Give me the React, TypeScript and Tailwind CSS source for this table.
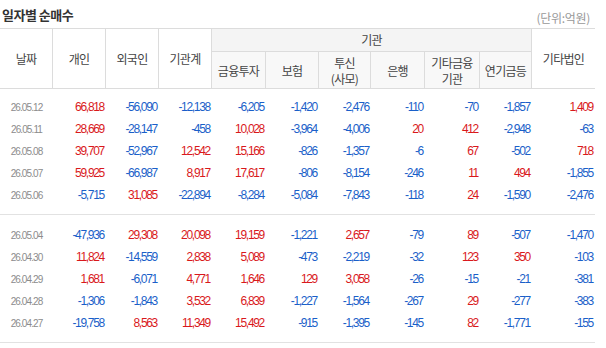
const COLS = "grid grid-cols-[53px_53px_53px_53px_54px_53px_52px_54px_55px_52px_63px]";

type Row = { date: string; values: string[] };

const groups: Row[][] = [
  [
    { date: "26.05.12", values: ["66,818", "-56,090", "-12,138", "-6,205", "-1,420", "-2,476", "-110", "-70", "-1,857", "1,409"] },
    { date: "26.05.11", values: ["28,669", "-28,147", "-458", "10,028", "-3,964", "-4,006", "20", "412", "-2,948", "-63"] },
    { date: "26.05.08", values: ["39,707", "-52,967", "12,542", "15,166", "-826", "-1,357", "-6", "67", "-502", "718"] },
    { date: "26.05.07", values: ["59,925", "-66,987", "8,917", "17,617", "-806", "-8,154", "-246", "11", "494", "-1,855"] },
    { date: "26.05.06", values: ["-5,715", "31,085", "-22,894", "-8,284", "-5,084", "-7,843", "-118", "24", "-1,590", "-2,476"] },
  ],
  [
    { date: "26.05.04", values: ["-47,936", "29,308", "20,098", "19,159", "-1,221", "2,657", "-79", "89", "-507", "-1,470"] },
    { date: "26.04.30", values: ["11,824", "-14,559", "2,838", "5,089", "-473", "-2,219", "-32", "123", "350", "-103"] },
    { date: "26.04.29", values: ["1,681", "-6,071", "4,771", "1,646", "129", "3,058", "-26", "-15", "-21", "-381"] },
    { date: "26.04.28", values: ["-1,306", "-1,843", "3,532", "6,839", "-1,227", "-1,564", "-267", "29", "-277", "-383"] },
    { date: "26.04.27", values: ["-19,758", "8,563", "11,349", "15,492", "-915", "-1,395", "-145", "82", "-1,771", "-155"] },
  ],
];

const subHeads = [["금융투자"], ["보험"], ["투신", "(사모)"], ["은행"], ["기타금융", "기관"], ["연기금등"]];

function DataRow({ row }: { row: Row }) {
  return (
    <div className={`${COLS} h-[22px] items-center`}>
      <div className="text-center text-[10px] tracking-[-0.9px] text-[#8c8c8c]">{row.date}</div>
      {row.values.map((v, i) => (
        <div
          key={i}
          className={`pr-[2px] text-right text-[12px] tracking-[-1.3px] ${
            v.startsWith("-") ? "text-[#1a5fc9]" : "text-[#d9181b]"
          }`}
        >
          {v}
        </div>
      ))}
    </div>
  );
}

export default function App() {
  return (
    <div className="h-[348px] w-[606px] overflow-hidden bg-white font-['Liberation_Sans',sans-serif]">
      {/* Title */}
      <div className="flex h-[28px] w-[595px] items-start justify-between">
        <h2 className="pl-[2px] pt-[7px] font-['Noto_Sans_CJK_KR',sans-serif] text-[13px] font-bold leading-[16px] tracking-[-0.5px] text-[#333]">
          일자별 순매수
        </h2>
        <span className="pr-[5px] pt-[10px] font-['Noto_Sans_CJK_KR',sans-serif] text-[12px] leading-[16px] tracking-[-0.3px] text-[#999]">
          (단위:억원)
        </span>
      </div>

      <div className="w-[595px]">
        {/* Header */}
        <div
          className={`${COLS} grid-rows-[23px_36px] border-y border-[#dcdcdc] font-['Noto_Sans_CJK_KR',sans-serif] text-[12px] leading-[16px] tracking-[-0.7px] text-[#444]`}
        >
          {["날짜", "개인", "외국인", "기관계"].map((h) => (
            <div key={h} className="row-span-2 flex items-center justify-center border-r border-[#dcdcdc]">
              {h}
            </div>
          ))}
          <div className="col-span-6 flex items-center justify-center border-b border-r border-[#dcdcdc] bg-[#f4f4f4]">
            기관
          </div>
          <div className="row-span-2 flex items-center justify-center">기타법인</div>
          {subHeads.map((lines) => (
            <div
              key={lines[0]}
              className="flex flex-col items-center justify-center border-r border-[#dcdcdc] bg-[#f8f8f8] pt-[2px] text-center"
            >
              {lines.map((l) => (
                <span key={l}>{l}</span>
              ))}
            </div>
          ))}
        </div>

        {/* Body */}
        {groups.map((rows, gi) => (
          <div
            key={gi}
            className={`border-b border-[#e2e2e2] pb-[8px] ${gi === 0 ? "pt-[7px]" : "pt-[9px]"}`}
          >
            {rows.map((r) => (
              <DataRow key={r.date} row={r} />
            ))}
          </div>
        ))}
      </div>
    </div>
  );
}
